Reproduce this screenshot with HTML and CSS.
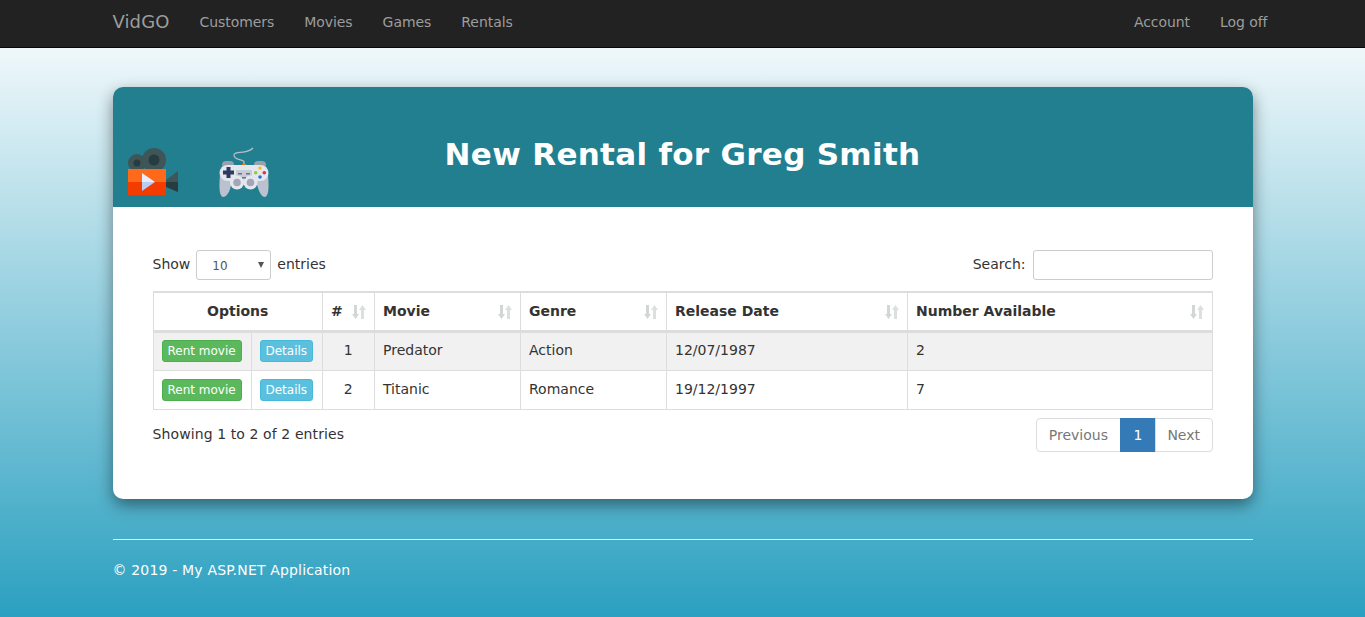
FILE: index.html
```html
<!DOCTYPE html>
<html lang="en">
<head>
    <meta charset="UTF-8">
    <meta name="viewport" content="width=device-width, initial-scale=1.0">
    <title>New Rental - VidGO</title>
    <link rel="stylesheet" href="styles.css">
</head>
<body>

    <nav class="navbar">
        <div class="nav-inner">
            <a class="brand" href="#">VidGO</a>
            <a class="nav-link" href="#">Customers</a>
            <a class="nav-link" href="#">Movies</a>
            <a class="nav-link" href="#">Games</a>
            <a class="nav-link" href="#">Rentals</a>
            <a class="nav-link nav-push" href="#">Account</a>
            <a class="nav-link" href="#">Log off</a>
        </div>
    </nav>

    <div class="container">
        <div class="card">
            <div class="card-head">
                <svg class="icon-camera" viewBox="0 0 50 48" width="50" height="48">
                    <circle cx="9" cy="15" r="9" fill="#3f5558"/>
                    <circle cx="9" cy="15" r="3.5" fill="#263c40"/>
                    <circle cx="26" cy="12" r="12" fill="#3f5558"/>
                    <circle cx="26" cy="12" r="5.5" fill="#263c40"/>
                    <rect x="0" y="21" width="38" height="13" fill="#ff6a1a"/>
                    <rect x="0" y="34" width="38" height="13" fill="#f53c00"/>
                    <path d="M14 25 L27 34 H14 Z" fill="#e6edfb"/>
                    <path d="M14 34 H27 L14 43 Z" fill="#b9ccf2"/>
                    <path d="M38 32 L50 23 V34 H38 Z" fill="#3f5558"/>
                    <path d="M38 34 H50 V44 L38 39 Z" fill="#263c40"/>
                </svg>
                <svg class="icon-pad" viewBox="0 0 50 50" width="50" height="50">
                    <path d="M25 19 V15 C25 12 15 14 15 8 C15 3 28 8 34 1" fill="none" stroke="#b9c0cc" stroke-width="1.2"/>
                    <rect x="23" y="17" width="4" height="4" fill="#d9820f"/>
                    <rect x="3" y="14" width="12" height="8" rx="4" fill="#9aa0b0"/>
                    <rect x="35" y="14" width="12" height="8" rx="4" fill="#9aa0b0"/>
                    <path d="M1 28 C0 38 0 49 4 50 C8 50 11 44 12 38 H38 C40 44 42 50 46 50 C50 49 50 38 49 28 Z" fill="#bcc1cf"/>
                    <rect x="0.5" y="18" width="49" height="16" rx="8" fill="#e4e7ee"/>
                    <rect x="17" y="23" width="16" height="11" fill="#c8ccd6"/>
                    <circle cx="18" cy="35.5" r="7" fill="#e4e7ee"/>
                    <circle cx="31.5" cy="35.5" r="7" fill="#e4e7ee"/>
                    <circle cx="18" cy="35.5" r="3.8" fill="#a2a6b6"/>
                    <circle cx="31.5" cy="35.5" r="3.8" fill="#a2a6b6"/>
                    <path d="M7.5 20 H11.5 V23.5 H15 V27.5 H11.5 V31 H7.5 V27.5 H4 V23.5 H7.5 Z" fill="#2f3b5f"/>
                    <rect x="19" y="26" width="4" height="1.5" fill="#6b7089"/>
                    <rect x="27" y="26" width="4" height="1.5" fill="#6b7089"/>
                    <rect x="23" y="30" width="4" height="1.5" fill="#6b7089"/>
                    <circle cx="41" cy="21" r="1.8" fill="#f3c41a"/>
                    <circle cx="45.3" cy="25.7" r="1.8" fill="#e0304a"/>
                    <circle cx="36.7" cy="25.7" r="1.8" fill="#8fcf3c"/>
                    <circle cx="41" cy="30" r="1.8" fill="#2f6fd0"/>
                </svg>
                <h1 class="card-title">New Rental for Greg Smith</h1>
            </div>

            <div class="card-body">
                <div class="table-top">
                    <label class="length">Show
                        <span class="fake-select">10<i class="caret"></i></span>
                        entries</label>
                    <label class="search">Search:<input type="text"></label>
                </div>

                <table class="rentals">
                    <colgroup>
                        <col class="c-rent"><col class="c-details"><col class="c-num">
                        <col class="c-movie"><col class="c-genre"><col class="c-date"><col>
                    </colgroup>
                    <thead>
                        <tr>
                            <th colspan="2" class="center">Options</th>
                            <th class="sortable">#<svg class="sort" viewBox="0 0 14 14"><path class="sort-down" d="M2 0 H5 V9 H7 L3.5 14 L0 9 H2 Z"/><path d="M9 14 H12 V5 H14 L10.5 0 L7 5 H9 Z"/></svg></th>
                            <th class="sortable">Movie<svg class="sort" viewBox="0 0 14 14"><path class="sort-down" d="M2 0 H5 V9 H7 L3.5 14 L0 9 H2 Z"/><path d="M9 14 H12 V5 H14 L10.5 0 L7 5 H9 Z"/></svg></th>
                            <th class="sortable">Genre<svg class="sort" viewBox="0 0 14 14"><path class="sort-down" d="M2 0 H5 V9 H7 L3.5 14 L0 9 H2 Z"/><path d="M9 14 H12 V5 H14 L10.5 0 L7 5 H9 Z"/></svg></th>
                            <th class="sortable">Release Date<svg class="sort" viewBox="0 0 14 14"><path class="sort-down" d="M2 0 H5 V9 H7 L3.5 14 L0 9 H2 Z"/><path d="M9 14 H12 V5 H14 L10.5 0 L7 5 H9 Z"/></svg></th>
                            <th class="sortable">Number Available<svg class="sort" viewBox="0 0 14 14"><path class="sort-down" d="M2 0 H5 V9 H7 L3.5 14 L0 9 H2 Z"/><path d="M9 14 H12 V5 H14 L10.5 0 L7 5 H9 Z"/></svg></th>
                        </tr>
                    </thead>
                    <tbody>
                        <tr class="odd">
                            <td class="cell-btn"><a class="btn btn-green" href="#">Rent movie</a></td>
                            <td class="cell-btn"><a class="btn btn-blue" href="#">Details</a></td>
                            <td class="center">1</td>
                            <td>Predator</td>
                            <td>Action</td>
                            <td>12/07/1987</td>
                            <td>2</td>
                        </tr>
                        <tr>
                            <td class="cell-btn"><a class="btn btn-green" href="#">Rent movie</a></td>
                            <td class="cell-btn"><a class="btn btn-blue" href="#">Details</a></td>
                            <td class="center">2</td>
                            <td>Titanic</td>
                            <td>Romance</td>
                            <td>19/12/1997</td>
                            <td>7</td>
                        </tr>
                    </tbody>
                </table>

                <div class="table-bottom">
                    <div class="info">Showing 1 to 2 of 2 entries</div>
                    <ul class="pager">
                        <li><a href="#">Previous</a></li>
                        <li class="active"><a href="#">1</a></li>
                        <li><a href="#">Next</a></li>
                    </ul>
                </div>
            </div>
        </div>

        <hr class="rule">
        <footer class="foot">© 2019 - My ASP.NET Application</footer>
    </div>

</body>
</html>
```

FILE: styles.css
```css
* {
    box-sizing: border-box;
}
html, body {
    height: 617px;
    overflow: hidden;
}
body {
    margin: 0;
    font-family: "DejaVu Sans", Verdana, sans-serif;
    font-size: 14px;
    line-height: 20px;
    color: #333;
    background: linear-gradient(to bottom, #fff 0, #2ba0c0 100%);
}
a {
    text-decoration: none;
}

.navbar {
    height: 48px;
    background: #222;
    border-bottom: 1px solid #080808;
}
.nav-inner {
    width: 1170px;
    height: 44px;
    margin: 0 auto;
    padding-left: 15px;
    display: flex;
    align-items: center;
}
.brand {
    font-size: 18px;
    letter-spacing: 0.1px;
    color: #9d9d9d;
    margin-right: 15px;
}
.nav-link {
    color: #9d9d9d;
    padding: 0 15px;
    letter-spacing: -0.06px;
}
.nav-link:last-child {
    padding-right: 0;
}
.nav-push {
    margin-left: auto;
}

.container {
    width: 1140px;
    margin: 39px auto 0;
}
.card {
    height: 412px;
    background: #fff;
    border-radius: 10px;
    box-shadow: 0 6px 16px rgba(0,0,0,0.45);
}
.card-head {
    height: 120px;
    background: #227f8f;
    border-radius: 10px 10px 0 0;
    position: relative;
    display: flex;
    align-items: center;
    justify-content: center;
}
.card-title {
    margin: 14px 0 0 0;
    font-size: 31px;
    line-height: 33px;
    letter-spacing: 0.3px;
    font-weight: bold;
    color: #fff;
}
.icon-camera {
    position: absolute;
    left: 15px;
    top: 61px;
}
.icon-pad {
    position: absolute;
    left: 106px;
    top: 60px;
}

.card-body {
    padding: 43px 40px 0;
}
.table-top {
    display: flex;
    justify-content: space-between;
    align-items: flex-start;
    height: 30px;
    margin-bottom: 11px;
}
.length, .search {
    display: flex;
    align-items: flex-start;
    line-height: 28px;
}
.fake-select {
    position: relative;
    width: 75px;
    height: 30px;
    margin: 0 6px;
    padding: 5px 15px;
    font-size: 12px;
    line-height: 20px;
    color: #555;
    border: 1px solid #ccc;
    border-radius: 3px;
    background: #fff;
}
.caret {
    position: absolute;
    right: 6px;
    top: 11px;
    border-left: 3px solid transparent;
    border-right: 3px solid transparent;
    border-top: 6px solid #555;
}
.search input {
    width: 180px;
    height: 30px;
    margin-left: 7px;
    border: 1px solid #ccc;
    border-radius: 3px;
}

.rentals {
    width: 100%;
    table-layout: fixed;
    border-collapse: collapse;
    border: 1px solid #ddd;
}
.c-rent { width: 98px; }
.c-details { width: 71px; }
.c-num { width: 52px; }
.c-movie { width: 146px; }
.c-genre { width: 146px; }
.c-date { width: 241px; }
.rentals th, .rentals td {
    border: 1px solid #ddd;
    padding: 8px 8px 8px 8.5px;
    text-align: left;
    vertical-align: middle;
}
.rentals th {
    height: 39px;
    border-top-width: 2px;
    border-bottom-width: 3px;
}
.rentals td {
    height: 39px;
    padding-top: 0;
    padding-bottom: 2px;
}
.rentals .cell-btn {
    padding-left: 8px;
    padding-bottom: 0;
}
.rentals .center {
    text-align: center;
}
.sortable {
    position: relative;
}
.sort {
    position: absolute;
    right: 8px;
    top: 12px;
    width: 14px;
    height: 14px;
    fill: #dcdfdf;
}
.sort-down {
    fill: #d3d6d6;
}
.odd td {
    background: #f1f1f1;
}

.btn {
    display: inline-block;
    padding: 1px 5px;
    font-size: 12px;
    line-height: 18px;
    color: #fff;
    border-radius: 3px;
    border: 1px solid transparent;
    white-space: nowrap;
}
.btn-green {
    background: #5cb85c;
    border-color: #4cae4c;
}
.btn-blue {
    background: #5bc0de;
    border-color: #46b8da;
}

.table-bottom {
    display: flex;
    justify-content: space-between;
    margin-top: 8px;
}
.info {
    padding-top: 6px;
    letter-spacing: 0.1px;
}
.pager {
    display: flex;
    list-style: none;
    margin: 0;
    padding: 0;
}
.pager a {
    display: block;
    height: 34px;
    padding: 6px 12px;
    color: #777;
    background: #fff;
    border: 1px solid #ddd;
    margin-left: -1px;
}
.pager li:first-child a {
    border-radius: 4px 0 0 4px;
}
.pager li:last-child a {
    padding: 6px 11.5px;
    border-radius: 0 4px 4px 0;
}
.pager .active a {
    padding: 6px 12.5px;
    background: #337ab7;
    border-color: #337ab7;
    color: #fff;
}

.rule {
    margin: 40px 0 20px;
    border: 0;
    border-top: 1px solid #eee;
}
.foot {
    color: #fff;
    letter-spacing: 0.17px;
}
```
